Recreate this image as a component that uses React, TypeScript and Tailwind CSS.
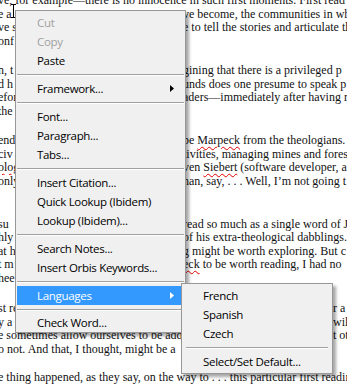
import React from 'react';

type Line = { l: string; r?: string; rx?: string };

const paragraphs: Line[][] = [
  [
    { l: 've, for example—there is no innocence in such first moments.  First read' },
    { l: 'e al', r: 've become, the communities in which' },
    { l: 've s', r: 'e to tell the stories and articulate the' },
    { l: 'onf' },
  ],
  [
    { l: 'n, t', r: 'gining that there is a privileged p' },
    { l: 'd h', r: 'unds does one presume to speak p' },
    { l: 'efor', r: 'aders—immediately after having r' },
    { l: 'the' },
  ],
  [
    { l: 'end', r: 'be Marpeck from the theologians.  T' },
    { l: 'civ', r: 'tivities, managing mines and fores' },
    { l: 'olog', r: 'ven Siebert (software developer, a' },
    { l: 'only', r: 'han, say, . . . Well, I’m not going t' },
    { l: '' },
  ],
  [
    { l: 'su', r: 'read so much as a single word of J' },
    { l: 'hly', r: 'of his extra-theological dabblings.  B' },
    { l: 'at h', r: 'g might be worth exploring.  But c' },
    { l: 't m', r: 'eck to be worth reading, I had no' },
    { l: 'hee' },
  ],
  [
    { l: 'st re', r: 'r a', rx: 'far' },
    { l: 'y a', r: 'will', rx: 'far' },
    { l: 'e sometimes allow ourselves to be add', r: 't oth', rx: 'far' },
    { l: 'o not.  And that, I thought, might be a' },
  ],
  [{ l: 'e thing happened, as they say, on the way to . . . this particular first reading' }],
];

function Squiggle({ children }: { children: React.ReactNode }) {
  return (
    <span className="underline decoration-wavy decoration-[#e00000] decoration-1 underline-offset-2">
      {children}
    </span>
  );
}

function renderRight(text: string) {
  if (text.startsWith('be Marpeck')) {
    return (
      <>
        be <Squiggle>Marpeck</Squiggle>
        {text.slice(10)}
      </>
    );
  }
  if (text.startsWith('ven Siebert')) {
    return (
      <>
        ven <Squiggle>Siebert</Squiggle>
        {text.slice(11)}
      </>
    );
  }
  if (text.startsWith('eck to')) {
    return (
      <>
        <Squiggle>eck</Squiggle>
        {text.slice(3)}
      </>
    );
  }
  return text;
}

function DocLine({ line }: { line: Line }) {
  if (line.r === undefined) {
    return <div className="h-[13.5px] whitespace-nowrap ml-[-2px]">{line.l}</div>;
  }
  return (
    <div className="h-[13.5px] whitespace-nowrap flex">
      <div className={line.rx === 'far' ? 'w-[335px] shrink-0 overflow-hidden ml-[-2px]' : 'w-[185px] shrink-0 overflow-hidden ml-[-2px]'}>
        {line.l === 'olog' ? <Squiggle>olog</Squiggle> : line.l}
      </div>
      <div>{renderRight(line.r)}</div>
    </div>
  );
}

function Arrow({ white }: { white?: boolean }) {
  return (
    <svg width="4" height="7" viewBox="0 0 4 7" className="ml-auto mr-[10px]">
      <path d="M0 0 L4 3.5 L0 7 Z" fill={white ? '#ffffff' : '#000000'} />
    </svg>
  );
}

function Item({
  label,
  disabled,
  sub,
  active,
  short,
}: {
  label: string;
  disabled?: boolean;
  sub?: boolean;
  active?: boolean;
  short?: boolean;
}) {
  return (
    <div
      className={
        (short ? 'h-[18px] ' : 'h-[19px] ') +
        'flex items-center pl-[20px] ' +
        (active ? 'bg-[#3399ff] text-white' : disabled ? 'text-[#a0a0a0]' : 'text-black')
      }
    >
      <span>{label}</span>
      {sub && <Arrow white={active} />}
    </div>
  );
}

function Sep() {
  return (
    <div className="h-[9px] flex flex-col justify-center">
      <div className="h-px bg-[#a0a0a0]" />
      <div className="h-px bg-white" />
    </div>
  );
}

export default function App() {
  return (
    <div className="relative w-[347px] h-[387px] overflow-hidden bg-white">
      {/* document text */}
      <div className="mt-[-6px] font-['Liberation_Serif',serif] text-[12px] leading-[13.5px] text-[#111]">
        {paragraphs.map((p, i) => (
          <div key={i} className={i === 3 ? 'mb-[17px]' : i === 4 ? 'mb-[15px]' : 'mb-[16px]'}>
            {p.map((line, j) => (
              <DocLine key={j} line={line} />
            ))}
          </div>
        ))}
      </div>

      {/* I-beam mouse cursor */}
      <svg width="7" height="14" viewBox="0 0 7 14" className="absolute left-[10px] top-[4px]">
        <path d="M1 0.5 H6 M3.5 0.5 V13.5 M1 13.5 H6" stroke="#ffffff" strokeWidth="2.5" fill="none" />
        <path d="M1 0.5 H6 M3.5 0.5 V13.5 M1 13.5 H6" stroke="#000000" strokeWidth="1" fill="none" />
      </svg>

      {/* context menu */}
      <div className="absolute left-[15px] top-[10px] w-[171px] bg-[#f0f0f0] border border-[#979797] pt-[2px] px-px shadow-[3px_3px_3px_rgba(0,0,0,0.35)] font-['Open_Sans',sans-serif] text-[11.5px] tracking-[-0.3px]">
        <Item label="Cut" disabled />
        <Item label="Copy" disabled />
        <Item label="Paste" />
        <Sep />
        <Item label="Framework..." sub />
        <Sep />
        <Item label="Font..." />
        <Item label="Paragraph..." />
        <Item label="Tabs..." />
        <Sep />
        <Item label="Insert Citation..." />
        <Item label="Quick Lookup (Ibidem)" />
        <Item label="Lookup (Ibidem)..." />
        <Sep />
        <Item label="Search Notes..." />
        <Item label="Insert Orbis Keywords..." />
        <Sep />
        <Item label="Languages" sub active />
        <Sep />
        <Item label="Check Word..." short />
      </div>

      {/* languages submenu */}
      <div className="absolute left-[181px] top-[283px] w-[152px] bg-[#f0f0f0] border border-[#979797] py-[2px] px-px shadow-[3px_3px_3px_rgba(0,0,0,0.35)] font-['Open_Sans',sans-serif] text-[11.5px] tracking-[-0.3px]">
        <Item label="French" />
        <Item label="Spanish" />
        <Item label="Czech" />
        <div className="px-[3px]">
          <Sep />
        </div>
        <Item label="Select/Set Default..." />
      </div>
    </div>
  );
}
